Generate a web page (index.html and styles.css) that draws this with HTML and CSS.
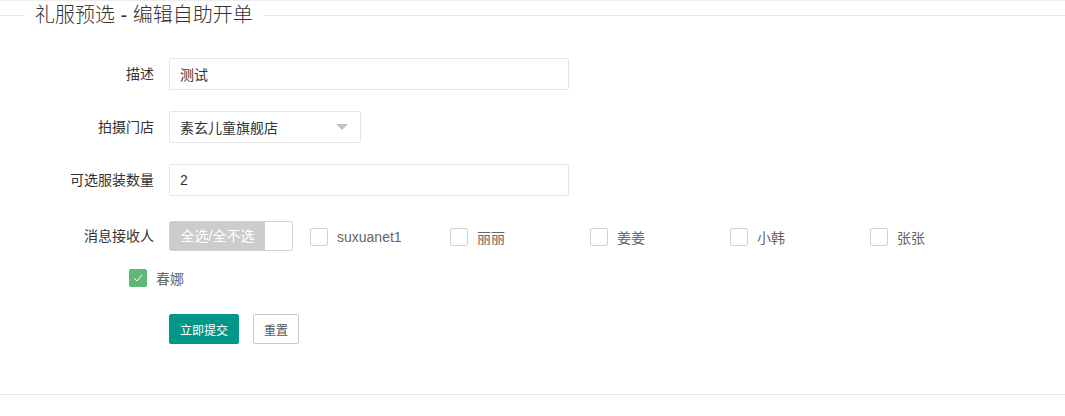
FILE: index.html
```html
<!DOCTYPE html>
<html lang="zh-CN">
<head>
  <meta charset="UTF-8" />
  <title>礼服预选 - 编辑自助开单</title>
  <meta name="viewport" content="width=device-width, initial-scale=1.0" />
  <link rel="stylesheet" href="styles.css">
</head>
<body>
  <div class="panel">
    <fieldset class="field-title">
      <legend>礼服预选 - 编辑自助开单</legend>
    </fieldset>

    <form class="form" onsubmit="return false">
      <div class="form-item">
        <label class="form-label">描述</label>
        <input class="input" type="text" value="测试" />
      </div>

      <div class="form-item">
        <label class="form-label">拍摄门店</label>
        <div class="select">
          <span>素玄儿童旗舰店</span>
          <i class="triangle"></i>
        </div>
      </div>

      <div class="form-item">
        <label class="form-label">可选服装数量</label>
        <input class="input" type="text" value="2" />
      </div>

      <div class="form-item recv">
        <label class="form-label">消息接收人</label>
        <div class="switch">
          <span class="switch-text">全选/全不选</span>
        </div>
        <div class="checkbox"><i class="box"></i><span>suxuanet1</span></div>
        <div class="checkbox"><i class="box"></i><span>丽丽</span></div>
        <div class="checkbox"><i class="box"></i><span>姜姜</span></div>
        <div class="checkbox"><i class="box"></i><span>小韩</span></div>
        <div class="checkbox"><i class="box"></i><span>张张</span></div>
        <div class="checkbox checked">
          <i class="box">
            <svg width="10" height="8" viewBox="0 0 10 8"><polyline points="1,4 4,7 9,1" fill="none" stroke="#fff" stroke-width="1"/></svg>
          </i>
          <span>春娜</span>
        </div>
      </div>

      <div class="btn-row">
        <button class="btn">立即提交</button>
        <button class="btn btn-primary" type="reset">重置</button>
      </div>
    </form>
  </div>
</body>
</html>
```

FILE: styles.css
```css
* { box-sizing: border-box; }

body {
  margin: 0;
  font-family: "Liberation Sans", "Noto Sans CJK SC", sans-serif;
  font-size: 14px;
  color: #333;
  background: #fff;
}

.panel {
  border-top: 1px solid #eeeeee;
  border-bottom: 1px solid #e6e6e6;
  height: 395px;
}

.field-title {
  margin: 0;
  padding: 0;
  border: none;
  border-top: 1px solid #e6e6e6;
}

.field-title legend {
  margin-left: 25px;
  padding: 0 10px;
  font-size: 20px;
  font-weight: 300;
  line-height: 28px;
  color: #333;
}

.form {
  padding: 29px 0 0 59px;
}

.form-item {
  display: flex;
  align-items: center;
  margin-bottom: 21px;
}

.form-label {
  flex-shrink: 0;
  width: 110px;
  padding-right: 15px;
  text-align: right;
  white-space: nowrap;
  line-height: 32px;
  color: #333;
}

.input {
  width: 400px;
  height: 32px;
  padding: 0 10px;
  border: 1px solid #e6e6e6;
  border-radius: 2px;
  font: inherit;
  color: #333;
  outline: none;
}

.select {
  width: 192px;
  height: 32px;
  padding: 0 12px 0 10px;
  border: 1px solid #e6e6e6;
  border-radius: 2px;
  display: flex;
  align-items: center;
  justify-content: space-between;
}

.triangle {
  width: 0;
  height: 0;
  border-left: 6px solid transparent;
  border-right: 6px solid transparent;
  border-top: 6px solid #c2c2c2;
}

/* receivers wrap onto a second line under the label */
.recv {
  flex-wrap: wrap;
  row-gap: 17px;
  padding-left: 70px;
  margin-top: 25px;
  margin-bottom: 27px;
}

.recv .form-label {
  margin-left: -70px;
  line-height: 30px;
}

.switch {
  flex-shrink: 0;
  width: 124px;
  height: 30px;
  margin-right: 17px;
  border: 1px solid #d2d2d2;
  border-radius: 2px;
  display: flex;
}

.switch-text {
  width: 95px;
  background: #cccccc;
  color: #fff;
  line-height: 28px;
  text-align: center;
}

.checkbox {
  flex-shrink: 0;
  width: 140px;
  height: 18px;
  margin-top: 1px;
  display: flex;
  align-items: center;
  gap: 9px;
  color: #666;
}

.checkbox .box {
  width: 18px;
  height: 18px;
  border: 1px solid #d2d2d2;
  border-radius: 2px;
  display: flex;
  align-items: center;
  justify-content: center;
}

.checkbox.checked .box {
  background: #5fb878;
  border-color: #5fb878;
}

.btn-row {
  padding-left: 110px;
  display: flex;
  gap: 14px;
}

.btn {
  height: 30px;
  padding: 0 10px;
  border: 1px solid #009688;
  border-radius: 2px;
  background: #009688;
  color: #fff;
  font: inherit;
  font-size: 12px;
  cursor: pointer;
}

.btn-primary {
  background: #fff;
  border-color: #c9c9c9;
  color: #555;
}
```
